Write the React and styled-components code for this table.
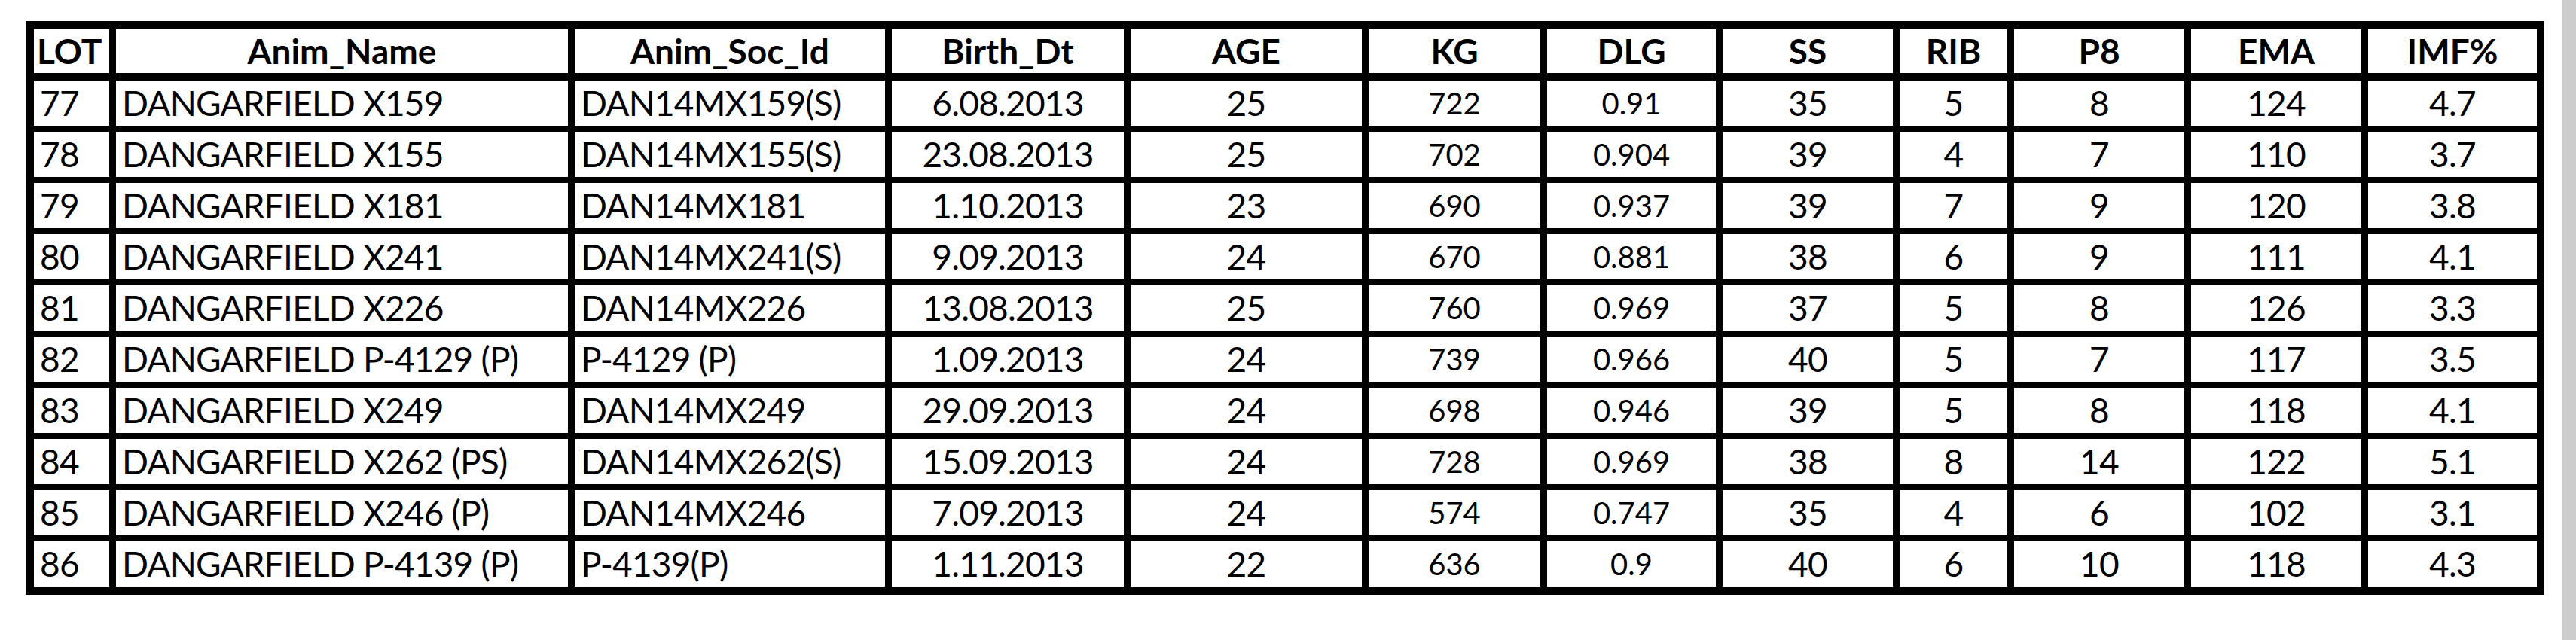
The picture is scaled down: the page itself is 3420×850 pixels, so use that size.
import React from "react";
import styled, { createGlobalStyle } from "styled-components";

const GlobalStyle = createGlobalStyle`
  html, body { margin: 0; padding: 0; background: #ffffff; }
  body { font-family: Lato, "Liberation Sans", sans-serif; color: #000; }
`;

const Page = styled.div`
  display: flex;
  width: 100%;
  height: 850px;
  background: #ffffff;
`;

const Sheet = styled.div`
  flex: 1;
  padding: 28px 0 0 34px;
`;

const ScrollStrip = styled.div`
  width: 18px;
  background: #cdcdcd;
`;

const Table = styled.div`
  display: inline-grid;
  grid-template-columns: 100px 600px 412px 308px 307px 228px 224px 226px 143px 226px 226px 224px;
  grid-auto-rows: 60px;
  column-gap: 9px;
  row-gap: 8px;
  padding: 11px 10px 11px 11px;
  background: #000000;
`;

const HeaderCell = styled.div`
  background: #ffffff;
  margin-bottom: 2px;
  display: flex;
  align-items: center;
  justify-content: ${(p) => (p.$align === "left" ? "flex-start" : "center")};
  padding: 0 ${(p) => (p.$align === "left" ? "4px" : "0")};
  font-family: Lato, "Liberation Sans", sans-serif;
  font-weight: 700;
  font-size: 46px;
  line-height: 1;
  white-space: nowrap;
`;

const Cell = styled.div`
  background: #ffffff;
  display: flex;
  align-items: center;
  justify-content: ${(p) => (p.$align === "left" ? "flex-start" : "center")};
  padding-left: ${(p) => (p.$align === "left" ? "8px" : "0")};
  font-family: Lato, "Liberation Sans", sans-serif;
  font-weight: 400;
  font-size: ${(p) => (p.$small ? "40px" : "46px")};
  letter-spacing: ${(p) => (p.$small ? "0" : "-0.8px")};
  line-height: 1;
  white-space: nowrap;
`;

const columns = [
  { key: "lot", label: "LOT", align: "left", headAlign: "left" },
  { key: "name", label: "Anim_Name", align: "left" },
  { key: "soc", label: "Anim_Soc_Id", align: "left" },
  { key: "birth", label: "Birth_Dt" },
  { key: "age", label: "AGE" },
  { key: "kg", label: "KG", small: true },
  { key: "dlg", label: "DLG", small: true },
  { key: "ss", label: "SS" },
  { key: "rib", label: "RIB" },
  { key: "p8", label: "P8" },
  { key: "ema", label: "EMA" },
  { key: "imf", label: "IMF%" },
];

const rows = [
  ["77", "DANGARFIELD X159", "DAN14MX159(S)", "6.08.2013", "25", "722", "0.91", "35", "5", "8", "124", "4.7"],
  ["78", "DANGARFIELD X155", "DAN14MX155(S)", "23.08.2013", "25", "702", "0.904", "39", "4", "7", "110", "3.7"],
  ["79", "DANGARFIELD X181", "DAN14MX181", "1.10.2013", "23", "690", "0.937", "39", "7", "9", "120", "3.8"],
  ["80", "DANGARFIELD X241", "DAN14MX241(S)", "9.09.2013", "24", "670", "0.881", "38", "6", "9", "111", "4.1"],
  ["81", "DANGARFIELD X226", "DAN14MX226", "13.08.2013", "25", "760", "0.969", "37", "5", "8", "126", "3.3"],
  ["82", "DANGARFIELD P-4129 (P)", "P-4129 (P)", "1.09.2013", "24", "739", "0.966", "40", "5", "7", "117", "3.5"],
  ["83", "DANGARFIELD X249", "DAN14MX249", "29.09.2013", "24", "698", "0.946", "39", "5", "8", "118", "4.1"],
  ["84", "DANGARFIELD X262 (PS)", "DAN14MX262(S)", "15.09.2013", "24", "728", "0.969", "38", "8", "14", "122", "5.1"],
  ["85", "DANGARFIELD X246 (P)", "DAN14MX246", "7.09.2013", "24", "574", "0.747", "35", "4", "6", "102", "3.1"],
  ["86", "DANGARFIELD P-4139 (P)", "P-4139(P)", "1.11.2013", "22", "636", "0.9", "40", "6", "10", "118", "4.3"],
];

export default function App() {
  return (
    <>
      <GlobalStyle />
      <Page>
        <Sheet>
          <Table>
            {columns.map((c) => (
              <HeaderCell key={c.key} $align={c.headAlign}>
                {c.label}
              </HeaderCell>
            ))}
            {rows.map((r) =>
              r.map((v, i) => (
                <Cell
                  key={r[0] + "-" + columns[i].key}
                  $align={columns[i].align}
                  $small={columns[i].small}
                >
                  {v}
                </Cell>
              ))
            )}
          </Table>
        </Sheet>
        <ScrollStrip />
      </Page>
    </>
  );
}
